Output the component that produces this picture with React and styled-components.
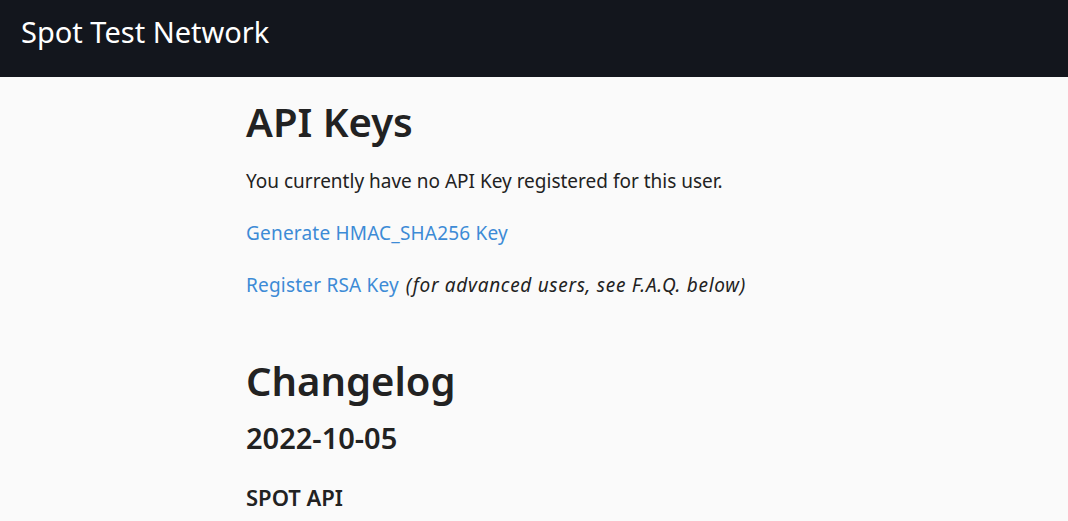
import React from 'react';
import styled, { createGlobalStyle } from 'styled-components';

const GlobalStyle = createGlobalStyle`
  body {
    margin: 0;
    background: #fafafa;
    font-family: "Noto Sans", "Open Sans", sans-serif;
    color: #222;
  }
`;

const Header = styled.header`
  height: 77px;
  background: #13161d;
  display: flex;
  align-items: center;
  padding-left: 21px;
`;

const Brand = styled.div`
  color: #fff;
  font-size: 29px;
  font-weight: 400;
  padding-bottom: 14px;
`;

const Main = styled.main`
  width: 576px;
  margin: 0 auto;
`;

const Title = styled.h1`
  font-size: 40px;
  font-weight: 600;
  margin: ${({ top }) => top}px 0 0;
  line-height: 1.2;
`;

const SubTitle = styled.h2`
  font-size: 29px;
  font-weight: 600;
  margin: ${({ top }) => top}px 0 0;
  line-height: 1.2;
`;

const Section = styled.h3`
  font-size: 22px;
  font-weight: 600;
  margin: ${({ top }) => top}px 0 0;
  line-height: 1.2;
`;

const Text = styled.p`
  font-size: 19px;
  line-height: 28px;
  margin: ${({ top }) => top}px 0 0;
`;

const Link = styled.a`
  color: #3d8bd6;
  text-decoration: none;
  letter-spacing: 0.2px;
`;

const Note = styled.em`
  font-style: italic;
  letter-spacing: 0.7px;
  margin-left: 2px;
`;

const App = () => (
  <>
    <GlobalStyle />
    <Header>
      <Brand>Spot Test Network</Brand>
    </Header>
    <Main>
      <Title top={21}>API Keys</Title>
      <Text top={21}>You currently have no API Key registered for this user.</Text>
      <Text top={24}>
        <Link href="#">Generate HMAC_SHA256 Key</Link>
      </Text>
      <Text top={24}>
        <Link href="#">Register RSA Key</Link> <Note>(for advanced users, see F.A.Q. below)</Note>
      </Text>
      <Title top={58}>Changelog</Title>
      <SubTitle top={16}>2022-10-05</SubTitle>
      <Section top={28}>SPOT API</Section>
    </Main>
  </>
);

export default App;
